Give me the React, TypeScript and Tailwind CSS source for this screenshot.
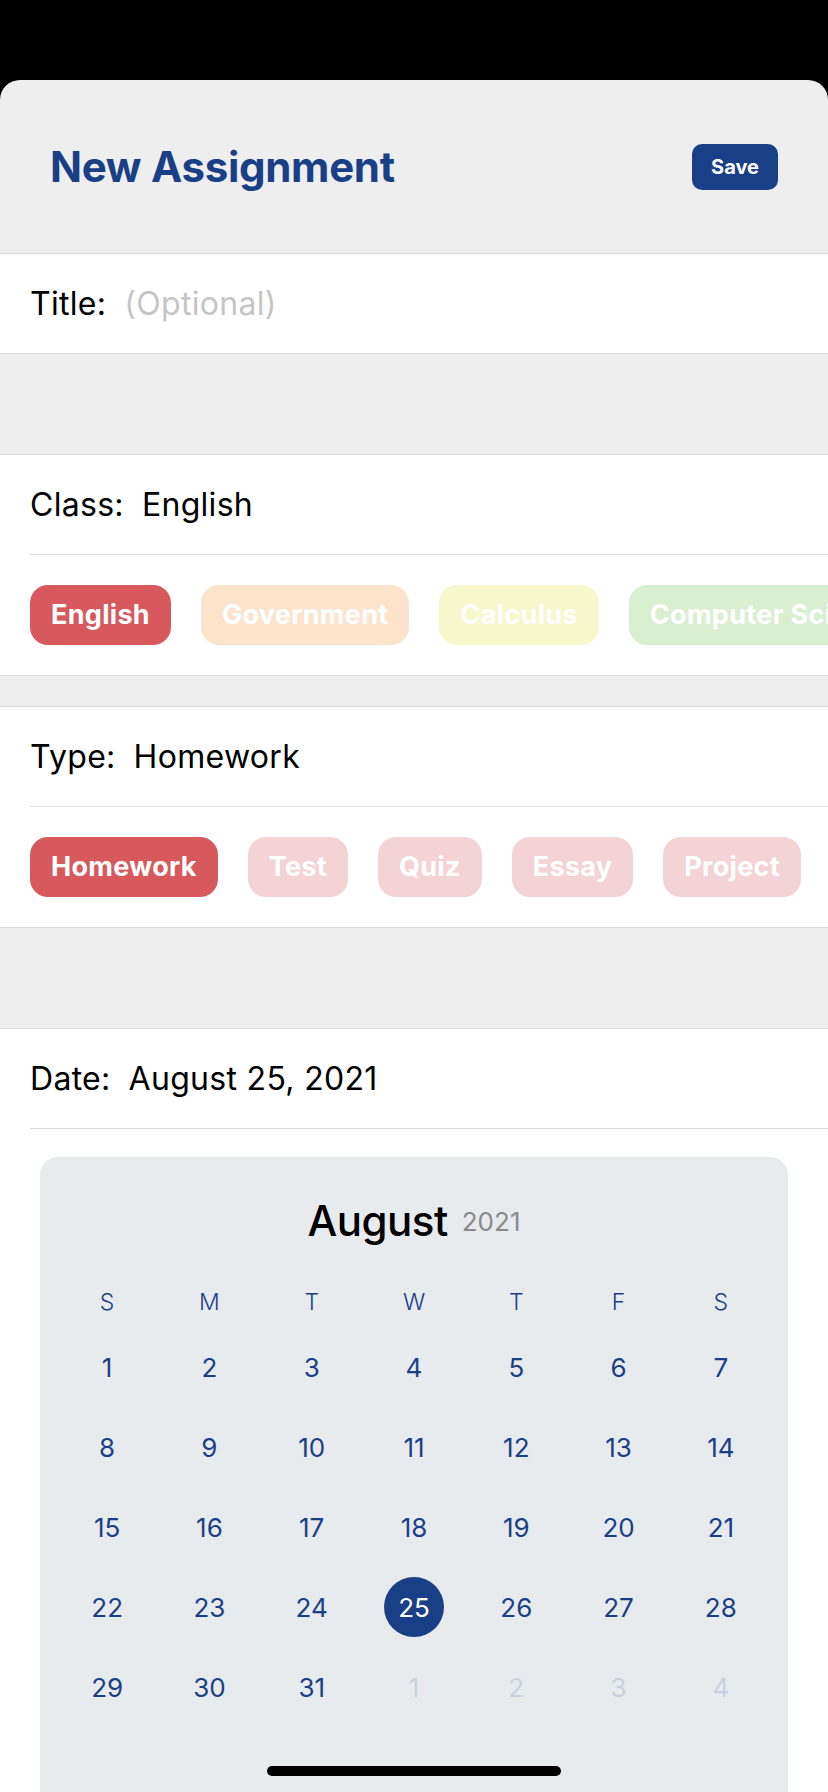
import { useState } from 'react';

const classes = [
  { name: 'English', color: 'bg-[#d7595e]' },
  { name: 'Government', color: 'bg-[#fbe4cb]' },
  { name: 'Calculus', color: 'bg-[#f8f6cb]' },
  { name: 'Computer Science', color: 'bg-[#d8f0cf]' },
];

const types = ['Homework', 'Test', 'Quiz', 'Essay', 'Project'];

const weekdays = ['S', 'M', 'T', 'W', 'T', 'F', 'S'];

// August 2021 starts on a Sunday, trailing days from September
const days: { day: number; muted?: boolean }[] = [
  ...Array.from({ length: 31 }, (_, i) => ({ day: i + 1 })),
  ...[1, 2, 3, 4].map((d) => ({ day: d, muted: true })),
];

function Row({ label, value, muted }: { label: string; value: string; muted?: boolean }) {
  return (
    <div className="h-[99px] flex items-center pl-[30px] gap-[18px] text-[32px] tracking-[0.3px]">
      <span className="text-black">{label}</span>
      <span className={muted ? 'text-[#c5c5c5]' : 'text-black'}>{value}</span>
    </div>
  );
}

function App() {
  const [selectedClass, setSelectedClass] = useState('English');
  const [selectedType, setSelectedType] = useState('Homework');
  const [selectedDay, setSelectedDay] = useState(25);

  return (
    <div
      className="relative h-[1792px] overflow-hidden bg-black pt-[80px]"
      style={{ fontFamily: 'Inter, "Noto Sans", sans-serif' }}
    >
      <div className="h-full rounded-t-[20px] bg-[#eeeeee] overflow-hidden">
        {/* header */}
        <div className="h-[173px] flex items-center justify-between px-[50px]">
          <h1 className="text-[42px] font-bold text-[#193f86] tracking-[-0.3px]">New Assignment</h1>
          <button className="w-[86px] h-[46px] rounded-[10px] bg-[#193f86] text-white text-[20px] font-bold">
            Save
          </button>
        </div>

        {/* title */}
        <div className="bg-white border-y border-[#d9d9d9]">
          <Row label="Title:" value="(Optional)" muted />
        </div>

        <div className="h-[100px]" />

        {/* class */}
        <div className="bg-white border-y border-[#d9d9d9]">
          <Row label="Class:" value={selectedClass} />
          <div className="ml-[30px] border-t border-[#dddddd]" />
          <div className="h-[120px] flex items-center gap-[30px] pl-[30px] overflow-hidden whitespace-nowrap">
            {classes.map((c) => (
              <button
                key={c.name}
                onClick={() => setSelectedClass(c.name)}
                className={`shrink-0 h-[60px] px-[21px] rounded-[18px] text-white text-[27px] font-bold tracking-[0.3px] ${c.color}`}
              >
                {c.name}
              </button>
            ))}
          </div>
        </div>

        <div className="h-[30px]" />

        {/* type */}
        <div className="bg-white border-y border-[#d9d9d9]">
          <Row label="Type:" value={selectedType} />
          <div className="ml-[30px] border-t border-[#dddddd]" />
          <div className="h-[120px] flex items-center gap-[30px] pl-[30px] overflow-hidden whitespace-nowrap">
            {types.map((t) => (
              <button
                key={t}
                onClick={() => setSelectedType(t)}
                className={`shrink-0 h-[60px] px-[21px] rounded-[18px] text-white text-[27px] font-bold tracking-[0.3px] ${
                  t === selectedType ? 'bg-[#d7595e]' : 'bg-[#f3d3d6]'
                }`}
              >
                {t}
              </button>
            ))}
          </div>
        </div>

        <div className="h-[100px]" />

        {/* date */}
        <div className="bg-white border-t border-[#d9d9d9] pb-[200px]">
          <Row label="Date:" value={`August ${selectedDay}, 2021`} />
          <div className="ml-[30px] border-t border-[#dddddd]" />

          <div className="mx-[40px] mt-[28px] rounded-[18px] bg-[#e8ebee] px-[16px] pt-[43px] pb-[200px]">
            <div className="h-[40px] flex items-center justify-center gap-[14px]">
              <span className="text-[42px] font-medium text-black tracking-[-0.5px]">August</span>
              <span className="text-[26px] text-[#8a8a8a] mt-[2px]">2021</span>
            </div>

            <div className="mt-[42px] h-[40px] grid grid-cols-7">
              {weekdays.map((w, i) => (
                <div key={i} className="flex items-center justify-center text-[23px] font-light text-[#193f86]">
                  {w}
                </div>
              ))}
            </div>

            <div className="mt-[5px] grid grid-cols-7">
              {days.map((d, i) => {
                const selected = !d.muted && d.day === selectedDay;
                return (
                  <div key={i} className="h-[80px] flex items-center justify-center">
                    <button
                      onClick={() => !d.muted && setSelectedDay(d.day)}
                      className={`w-[60px] h-[60px] rounded-full flex items-center justify-center text-[26px] ${
                        selected
                          ? 'bg-[#193f86] text-white'
                          : d.muted
                          ? 'text-[#c9d1df]'
                          : 'text-[#193f86]'
                      }`}
                    >
                      {d.day}
                    </button>
                  </div>
                );
              })}
            </div>
          </div>
        </div>
      </div>

      {/* home indicator */}
      <div className="absolute left-[267px] top-[1766px] w-[294px] h-[10px] rounded-full bg-black" />
    </div>
  );
}

export default App;
